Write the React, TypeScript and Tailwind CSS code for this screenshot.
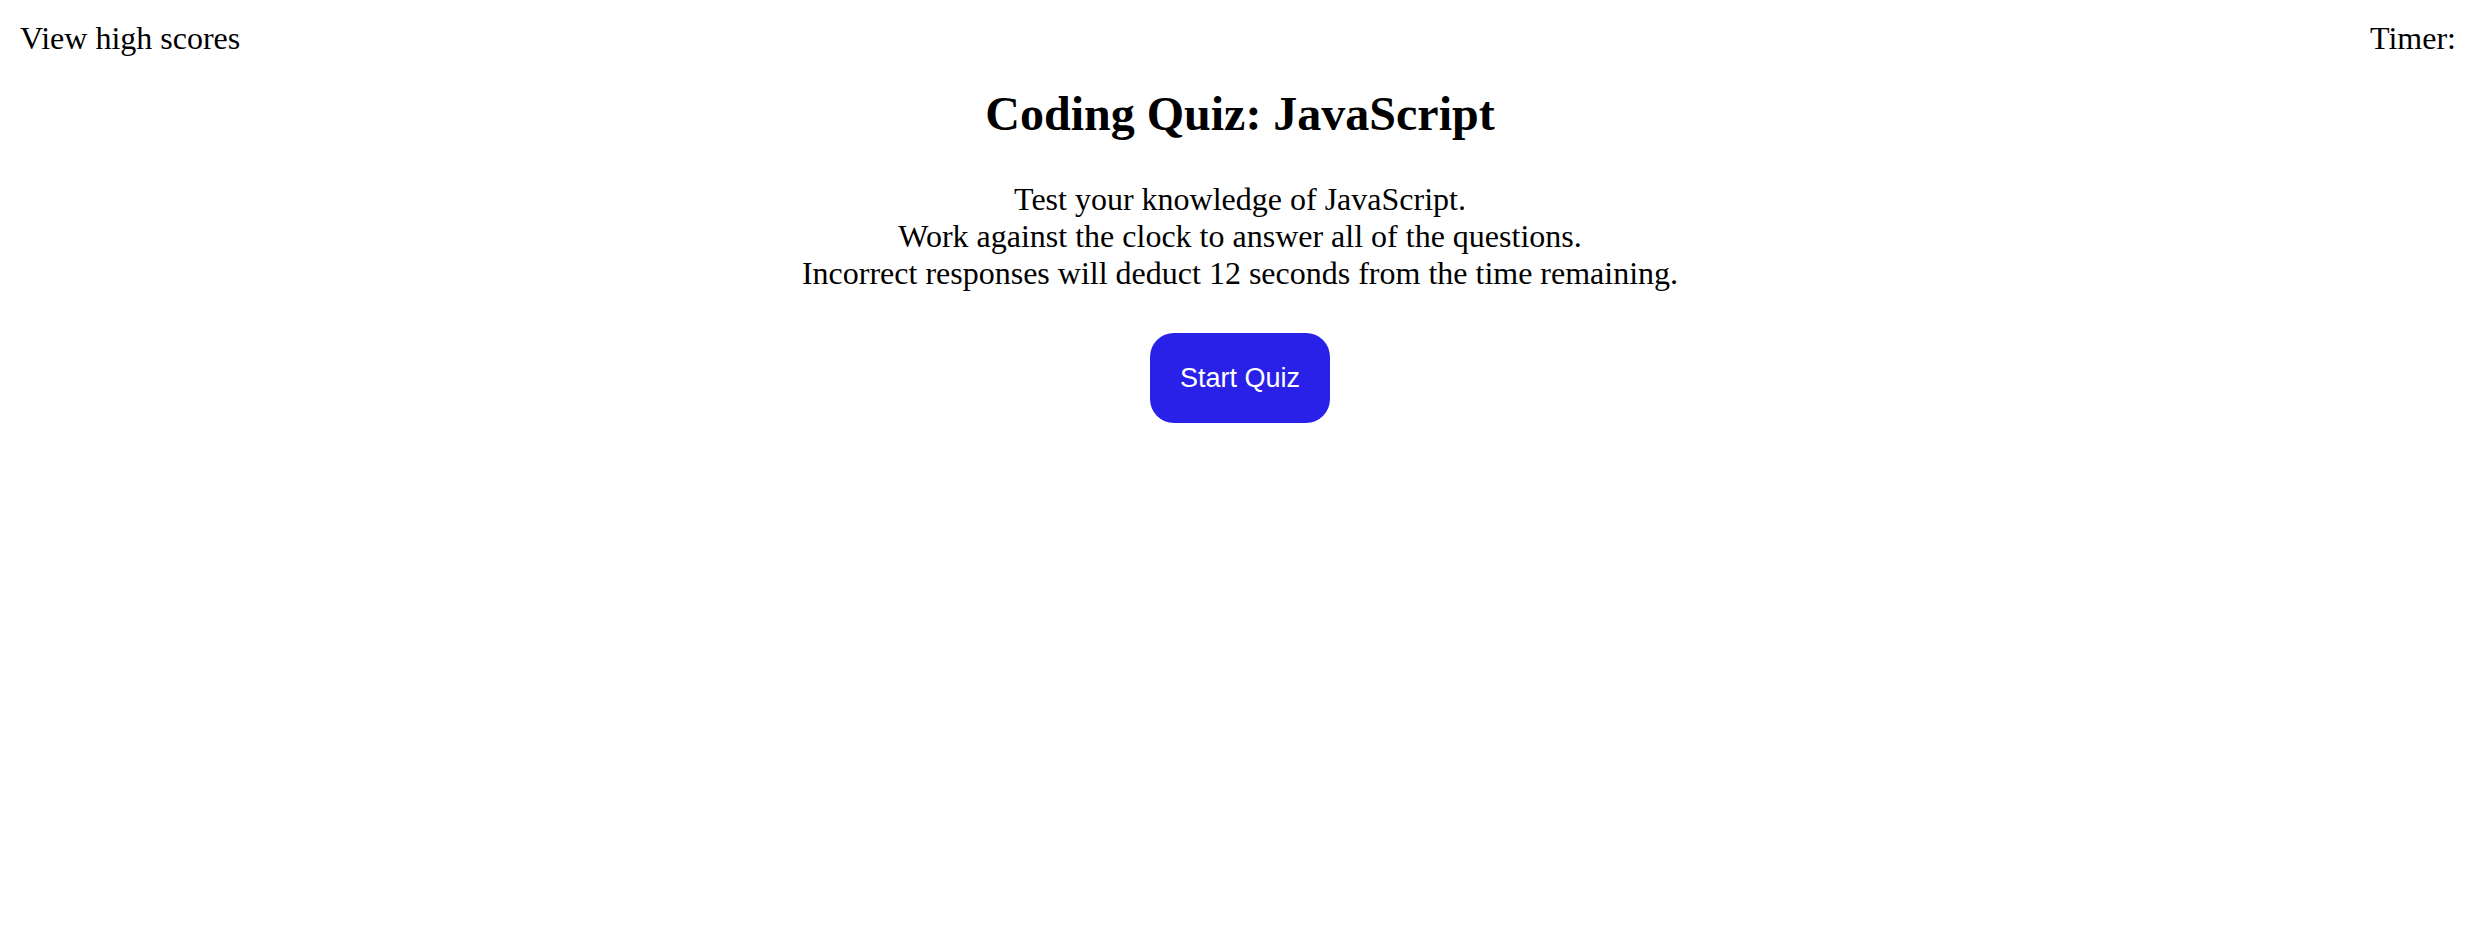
import { useState } from "react";

function App() {
  const [timeLeft] = useState<number | null>(null);

  return (
    <div className="min-h-screen bg-white text-black font-['Liberation_Serif',serif]">
      {/* Top bar */}
      <header className="flex items-start justify-between pl-[20px] pr-[24px] pt-[20px] text-[32px] leading-[37px]">
        <a href="#" className="text-black">View high scores</a>
        <div>
          Timer:{timeLeft !== null && <span> {timeLeft}</span>}
        </div>
      </header>

      {/* Start screen */}
      <main className="flex flex-col items-center text-center">
        <h1 className="mt-[29px] text-[48px] leading-[55px] font-bold">Coding Quiz: JavaScript</h1>
        <p className="mt-[40px] text-[32px] leading-[37px]">
          Test your knowledge of JavaScript.
          <br />
          Work against the clock to answer all of the questions.
          <br />
          Incorrect responses will deduct 12 seconds from the time remaining.
        </p>
        <button className="mt-[41px] h-[90px] px-[30px] rounded-[24px] bg-[#2a21e8] text-white text-[27px] font-['Liberation_Sans',Arial,sans-serif]">
          Start Quiz
        </button>
      </main>
    </div>
  );
}

export default App;
